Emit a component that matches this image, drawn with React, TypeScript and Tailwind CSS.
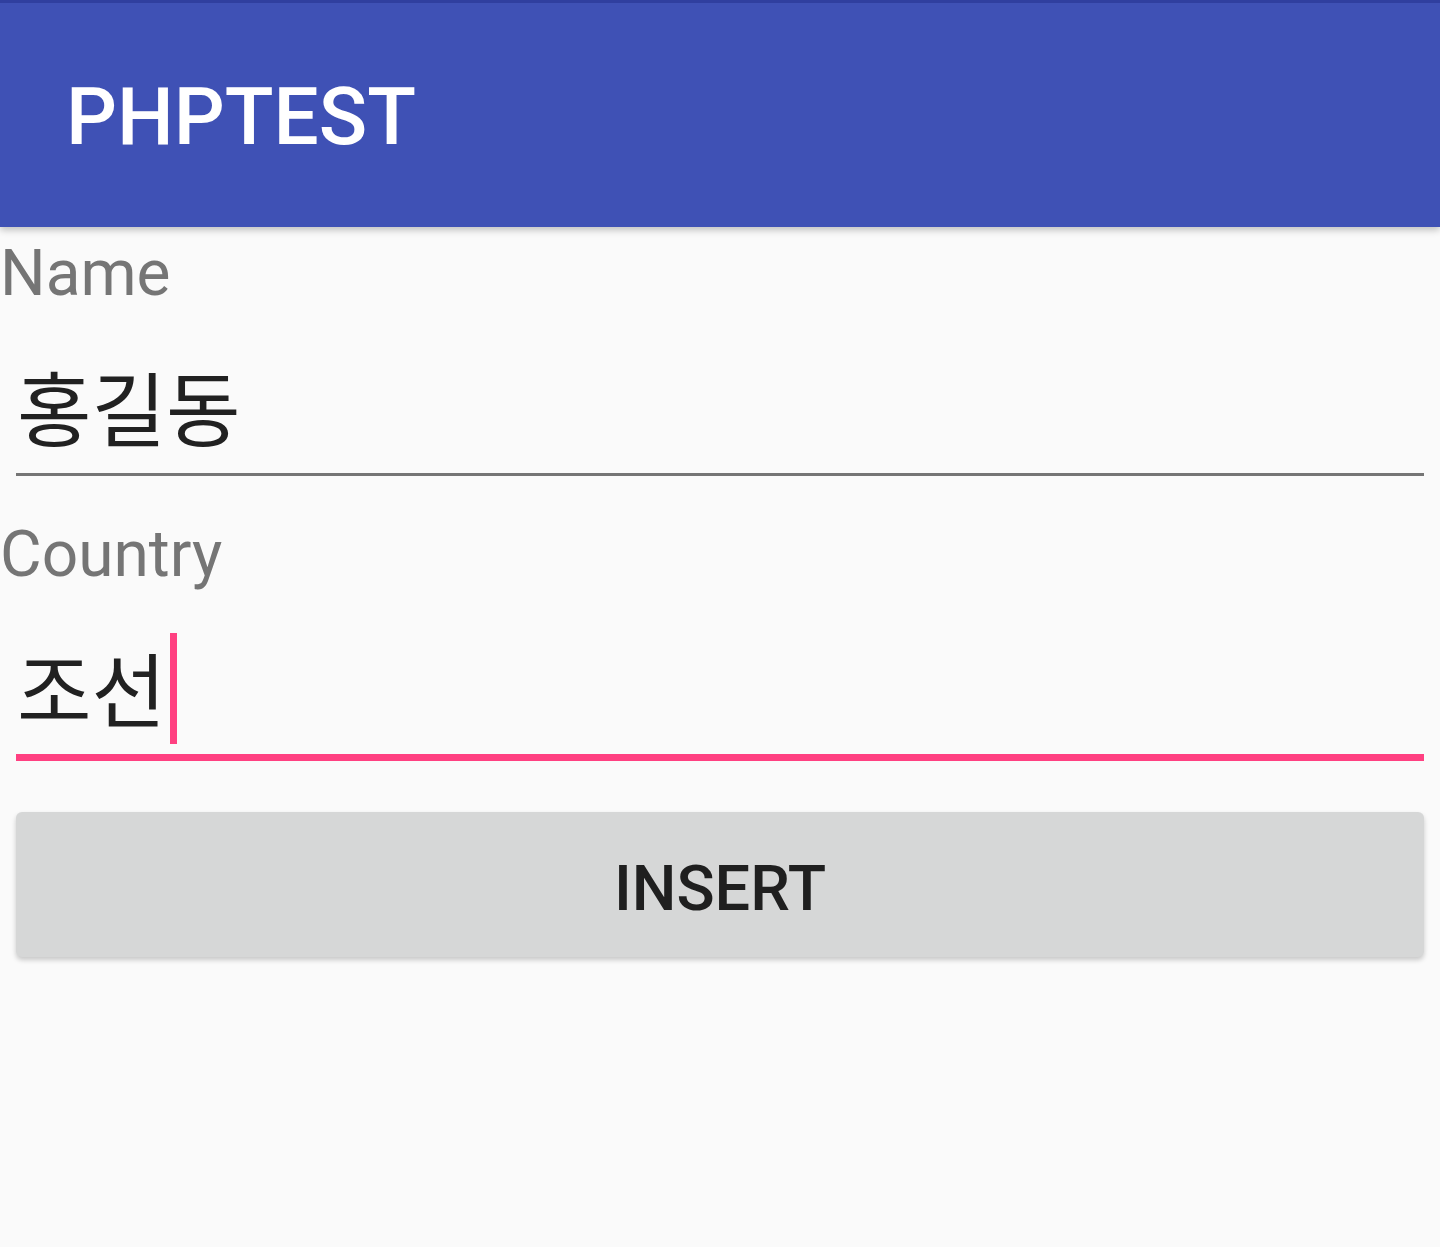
export default function App() {
  const font = { fontFamily: 'Roboto, "Noto Sans CJK KR", sans-serif' };
  return (
    <div className="min-h-[1247px] bg-[#FAFAFA]" style={font}>
      {/* app bar */}
      <header className="relative z-10 shadow-[0_3px_7px_rgba(0,0,0,0.24)]">
        <div className="h-[3px] bg-[#303F9F]" />
        <div className="flex h-[224px] items-center bg-[#3F51B5] pl-[66px] pt-[4px]">
          <h1 className="text-[80px] font-medium leading-none text-white">PHPTEST</h1>
        </div>
      </header>

      <main className="flex flex-col">
        <label className="mt-[15px] h-[64px] text-[64px] leading-none text-[#757575]">Name</label>
        <div className="mx-4 flex h-[170px] items-end border-b-[3px] border-[#757575] pb-[20px]">
          <span className="pl-[1px] text-[81px] leading-none text-[#212121]">홍길동</span>
        </div>

        <label className="mt-[47px] h-[64px] text-[64px] leading-none text-[#757575]">Country</label>
        <div className="mx-4 flex h-[174px] items-end border-b-[7px] border-[#FF4081] pb-[20px]">
          <span className="pl-[1px] text-[81px] leading-none text-[#212121]">조선</span>
          <span className="mb-[-10px] ml-[4px] h-[111px] w-[7px] bg-[#FF4081]" />
        </div>

        <button className="mx-4 mt-[51px] flex h-[145px] items-center justify-center rounded-[6px] bg-[#D6D7D7] pt-[7px] text-[63px] font-medium leading-none text-[#1F1F1F] shadow-[0_3px_5px_rgba(0,0,0,0.2)]">
          INSERT
        </button>
      </main>
    </div>
  );
}
